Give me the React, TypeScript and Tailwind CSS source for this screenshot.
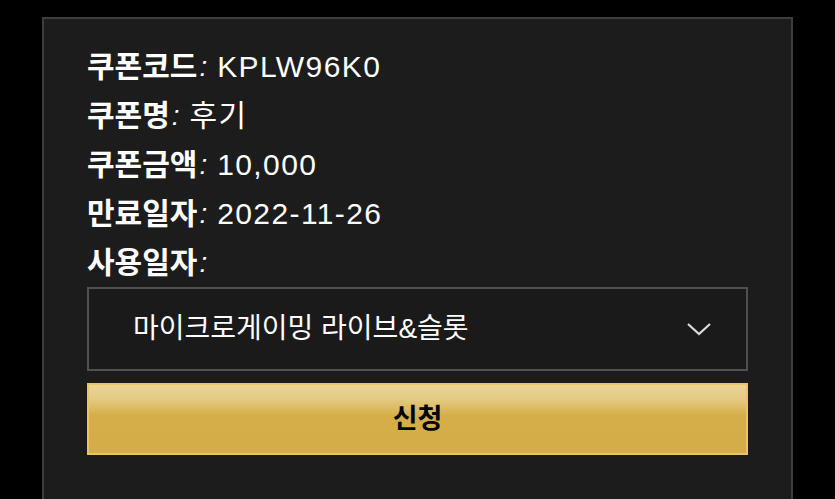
import React from "react";

const rows = [
  { label: "쿠폰코드", value: "KPLW96K0" },
  { label: "쿠폰명", value: "후기" },
  { label: "쿠폰금액", value: "10,000" },
  { label: "만료일자", value: "2022-11-26" },
  { label: "사용일자", value: "" },
];

const font = {
  fontFamily: '"Liberation Sans", "Noto Sans CJK KR", sans-serif',
};

export default function App() {
  return (
    <div className="w-[835px] h-[499px] bg-black overflow-hidden" style={font}>
      <div className="ml-[42px] mt-[17px] w-[751px] h-[520px] bg-[#1c1c1c] border-2 border-[#3d3d3d] px-[43px] pt-[23px]">
        <div className="flex flex-col">
          {rows.map((r) => (
            <div key={r.label} className="h-[49px] flex items-center text-white text-[30px]">
              <span className="font-bold">{r.label}</span>
              <span className="italic ml-[2px] mr-[10px] text-[28px]">:</span>
              <span className="text-[30px] tracking-[1.4px]">{r.value}</span>
            </div>
          ))}
        </div>
        <div className="h-[84px] border-2 border-[#505050] bg-[#1a1a1a] flex items-center justify-between pl-[44px] pr-[34px]">
          <span className="text-white text-[28px]">마이크로게이밍 라이브&amp;슬롯</span>
          <svg width="26" height="14" viewBox="0 0 26 14" fill="none">
            <path d="M2 2l11 10L24 2" stroke="#dcdcdc" strokeWidth="2.2" />
          </svg>
        </div>
        <button className="mt-[12px] w-full h-[72px] border-2 border-[#ebc65c] bg-[linear-gradient(to_bottom,#e9d597_0%,#e5cb83_20%,#d5ae49_45%,#d4ad48_100%)] text-black font-bold text-[27px] flex items-center justify-center">
          신청
        </button>
      </div>
    </div>
  );
}
